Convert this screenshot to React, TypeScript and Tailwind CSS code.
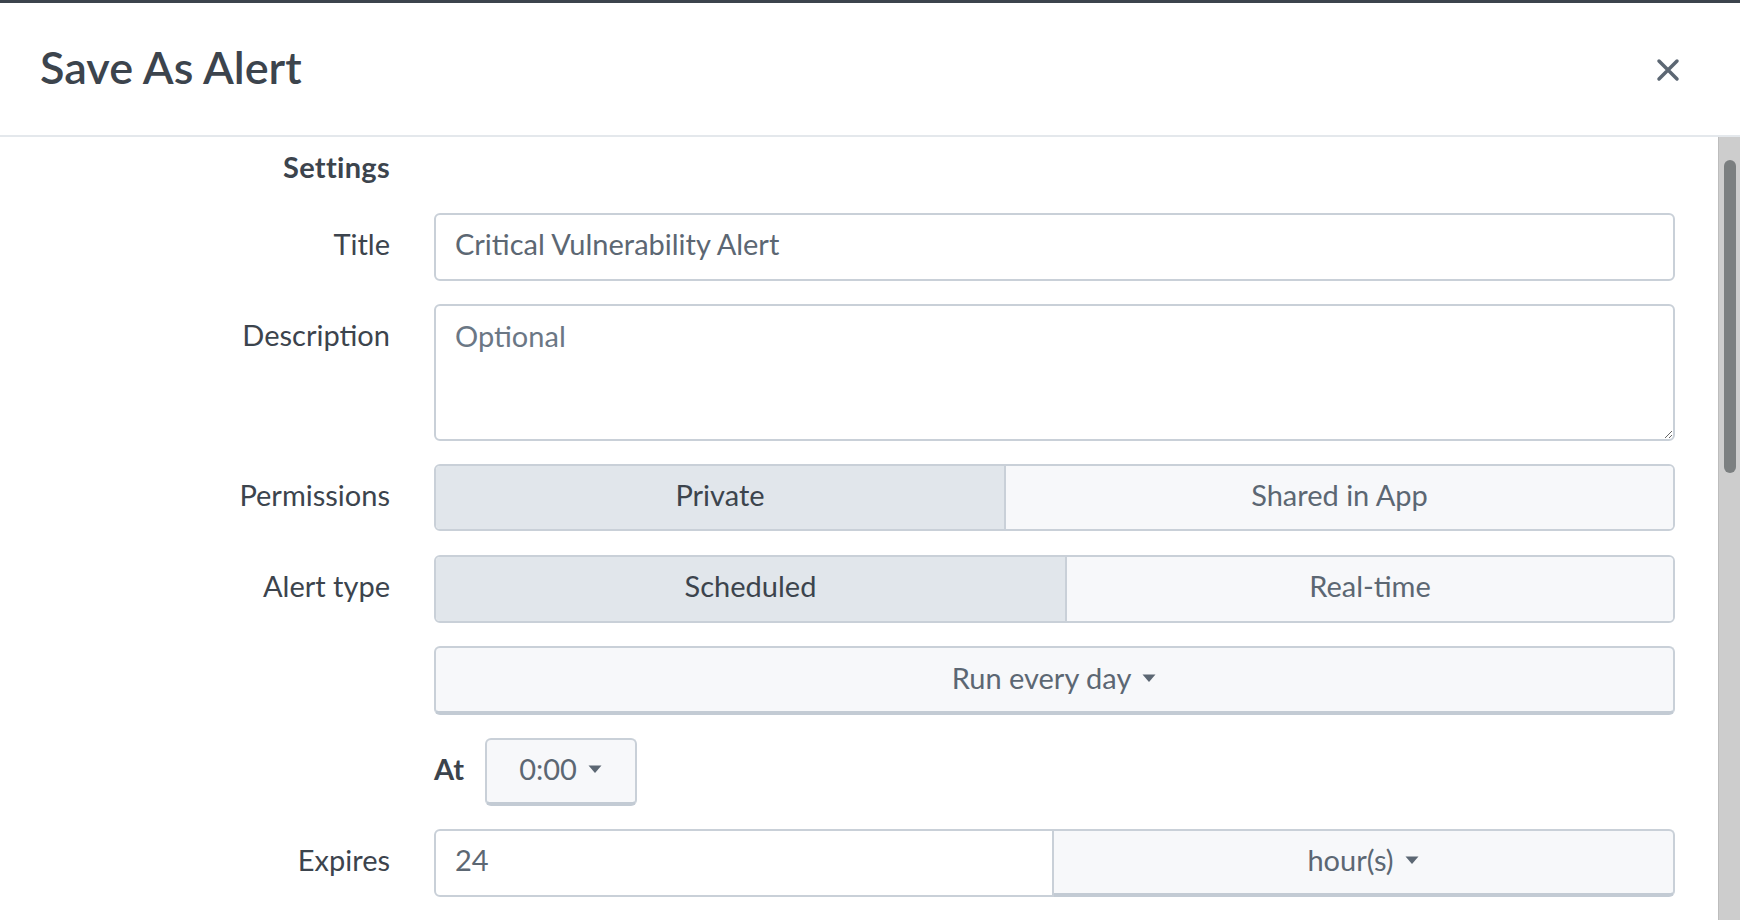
import React from "react";

function Caret() {
    return (
        <svg width="16" height="10" viewBox="0 0 16 10" className="ml-[10px] fill-[#5c6773]">
            <path d="M1.5 1.5h13L8 9z" />
        </svg>
    );
}

function Label({ children, bold }: { children?: React.ReactNode; bold?: boolean }) {
    return (
        <div className={`h-[68px] pb-[7px] flex items-center justify-end ${bold ? "font-bold" : ""}`}>
            {children}
        </div>
    );
}

export default function App() {
    return (
        <div className="h-[920px] w-full overflow-hidden bg-white font-[Lato,sans-serif] text-[29px] text-[#3c444d] border-t-[3px] border-[#3c444d] flex flex-col">
            <header className="h-[134px] shrink-0 flex items-center justify-between pl-[40px] pr-[60px] pb-[4px] border-b-2 border-[#e4e8ec]">
                <h1 className="text-[45px] font-semibold leading-none">Save As Alert</h1>
                <button className="text-[#5c6773] mt-[6px]">
                    <svg width="24" height="24" viewBox="0 0 24 24" stroke="currentColor" strokeWidth="3.5" strokeLinecap="round">
                        <path d="M3 3l18 18M21 3L3 21" />
                    </svg>
                </button>
            </header>

            <div className="flex flex-1 min-h-0">
                <div className="flex-1 pt-[12px] pr-[43px]">
                    <div className="grid grid-cols-[390px_1fr] gap-x-[44px] gap-y-[23px] items-start">
                        <div className="h-[41px] pb-[6px] flex items-center justify-end font-bold tracking-[0.3px]">Settings</div>
                        <div />

                        <Label>Title</Label>
                        <input
                            defaultValue="Critical Vulnerability Alert"
                            className="w-full h-[68px] rounded-[6px] border-2 border-[#c9d0d8] px-[19px] pb-[7px] text-[#5c6773] outline-none bg-white"
                        />

                        <Label>Description</Label>
                        <textarea
                            placeholder="Optional"
                            className="w-full h-[137px] rounded-[6px] border-2 border-[#c9d0d8] px-[19px] pt-[12px] leading-[36px] text-[#5c6773] placeholder:text-[#6b7785] outline-none bg-white resize-y block"
                        />

                        <Label>Permissions</Label>
                        <div className="flex h-[67px] rounded-[6px] border-2 border-[#c9d0d8] overflow-hidden">
                            <div className="w-[568px] pb-[6px] bg-[#e1e6eb] flex items-center justify-center">Private</div>
                            <div className="flex-1 pb-[6px] bg-[#f7f8fa] border-l-2 border-[#c9d0d8] flex items-center justify-center text-[#5c6773]">Shared in App</div>
                        </div>

                        <Label>Alert type</Label>
                        <div className="flex h-[68px] rounded-[6px] border-2 border-[#c9d0d8] overflow-hidden">
                            <div className="w-[629px] pb-[6px] bg-[#e1e6eb] flex items-center justify-center">Scheduled</div>
                            <div className="flex-1 pb-[6px] bg-[#f7f8fa] border-l-2 border-[#c9d0d8] flex items-center justify-center text-[#5c6773]">Real-time</div>
                        </div>

                        <Label />
                        <button className="h-[69px] pb-[4px] rounded-[6px] border-2 border-b-[4px] border-[#c9d0d8] border-b-[#c3cbd4] bg-[#f7f8fa] flex items-center justify-center text-[#5c6773]">
                            Run every day <Caret />
                        </button>

                        <Label />
                        <div className="h-[68px] flex items-center gap-[21px]">
                            <span className="font-bold pb-[7px]">At</span>
                            <button className="h-[68px] w-[152px] pb-[4px] rounded-[6px] border-2 border-b-[4px] border-[#c9d0d8] border-b-[#c3cbd4] bg-[#f7f8fa] flex items-center justify-center text-[#5c6773]">
                                0:00 <Caret />
                            </button>
                        </div>

                        <Label>Expires</Label>
                        <div className="flex h-[68px]">
                            <input
                                defaultValue="24"
                                className="w-[620px] h-full rounded-l-[6px] border-2 border-[#c9d0d8] px-[19px] pb-[7px] text-[#5c6773] outline-none bg-white"
                            />
                            <button className="flex-1 h-full pb-[4px] rounded-r-[6px] border-2 border-l-0 border-b-[4px] border-[#c9d0d8] border-b-[#c3cbd4] bg-[#f7f8fa] flex items-center justify-center text-[#5c6773]">
                                hour(s) <Caret />
                            </button>
                        </div>
                    </div>
                </div>

                <div className="w-[22px] shrink-0 bg-[#cdcdcd] border-l border-[#bdbdbd]">
                    <div className="mx-auto mt-[23px] w-[12px] h-[313px] rounded-full bg-[#7b7f80]" />
                </div>
            </div>
        </div>
    );
}
